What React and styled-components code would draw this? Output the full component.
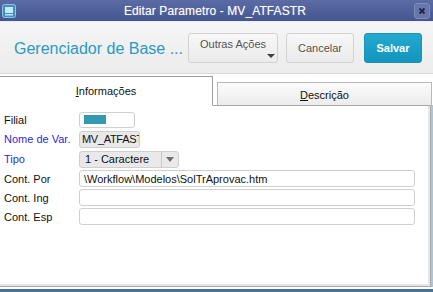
import React from 'react';
import styled, { createGlobalStyle } from 'styled-components';

const GlobalStyle = createGlobalStyle`
  html, body {
    margin: 0;
    padding: 0;
    background: #ffffff;
  }
  body {
    font-family: "Liberation Sans", Arial, sans-serif;
  }
`;

const Window = styled.div`
  width: 433px;
  height: 292px;
  display: flex;
  flex-direction: column;
  overflow: hidden;
  background: #ffffff;
  border-bottom: 3px solid #46729a;
  box-sizing: border-box;
`;

const TitleBar = styled.div`
  height: 21px;
  flex: none;
  display: flex;
  align-items: center;
  padding: 0 3px 0 2px;
  background: linear-gradient(#5b6ba6, #45558f);
  border-bottom: 1px solid #e8ecf4;
`;

const TitleText = styled.div`
  flex: 1;
  text-align: center;
  color: #ffffff;
  font-size: 12px;
  letter-spacing: 0.1px;
  text-shadow: 0 0 1px rgba(255, 255, 255, 0.4);
`;

const CloseBtn = styled.div`
  width: 14px;
  height: 14px;
  border-radius: 3px;
  background: #6777ac;
  border: 1px solid #7f8dbd;
  display: flex;
  align-items: center;
  justify-content: center;
`;

const Header = styled.div`
  height: 51px;
  flex: none;
  display: flex;
  align-items: center;
  padding: 0 11px 0 14px;
  background: linear-gradient(#f5f5f5, #ececec);
  border-bottom: 1px solid #d9d9d9;
`;

const AppTitle = styled.div`
  flex: 1;
  min-width: 0;
  white-space: nowrap;
  color: #2a9ac4;
  font-size: 16px;
  margin-top: 2px;
`;

const Button = styled.div`
  position: relative;
  flex: none;
  height: 30px;
  box-sizing: border-box;
  width: ${p => p.w}px;
  margin-left: ${p => p.gap || 0}px;
  display: flex;
  align-items: center;
  justify-content: center;
  border-radius: 3px;
  font-size: 11px;
  color: ${p => (p.primary ? '#ffffff' : '#555555')};
  font-weight: ${p => (p.primary ? 700 : 400)};
  background: ${p =>
    p.primary ? 'linear-gradient(#25a9cf, #1395bd)' : 'linear-gradient(#f7f7f7, #ebebeb)'};
  border: 1px solid ${p => (p.primary ? '#1a93b8' : '#d2d2d2')};
  padding-bottom: ${p => (p.drop ? 8 : 0)}px;
  margin-top: 1px;
`;

const Caret = styled.span`
  position: absolute;
  right: 2px;
  bottom: 4px;
  width: 0;
  height: 0;
  border-left: 4px solid transparent;
  border-right: 4px solid transparent;
  border-top: 4px solid #3f3f3f;
`;

const TabStrip = styled.div`
  height: 31px;
  flex: none;
  display: flex;
  align-items: flex-end;
  padding-right: 1px;
  position: relative;
  z-index: 1;
`;

const Tab = styled.div`
  box-sizing: border-box;
  width: ${p => p.w}px;
  margin-left: ${p => p.gap || 0}px;
  height: ${p => (p.active ? 30 : 23)}px;
  display: flex;
  align-items: center;
  justify-content: center;
  font-size: 11px;
  color: #111111;
  border: 1px solid ${p => (p.active ? '#9e9e9e' : '#b8b8b8')};
  border-left: ${p => (p.active ? 'none' : '1px solid #b8b8b8')};
  border-bottom: ${p => (p.active ? '1px solid #ffffff' : 'none')};
  background: ${p => (p.active ? '#ffffff' : 'linear-gradient(#fbfbfb, #ececec)')};
  margin-bottom: ${p => (p.active ? -1 : 0)}px;
  padding-top: ${p => (p.active ? 0 : 2)}px;

  u {
    text-decoration: underline;
    text-underline-offset: 1px;
  }
`;

const Panel = styled.div`
  flex: 1;
  margin-right: 2px;
  margin-bottom: 2px;
  border: 1px solid #a8a8a8;
  border-left: none;
  box-shadow: inset -2px -2px 0 #e6e6e6, 2px 0 0 #a9c7dc;
  padding: 4px 15px 0 4px;
  display: flex;
  flex-direction: column;
`;

const Row = styled.div`
  display: flex;
  align-items: center;
  height: ${p => p.h || 19}px;
`;

const Label = styled.div`
  width: 75px;
  flex: none;
  font-size: 11px;
  color: ${p => (p.blue ? '#2b2bd6' : '#111111')};
`;

const Field = styled.div`
  box-sizing: border-box;
  height: ${p => p.h || 17}px;
  width: ${p => (p.w ? `${p.w}px` : 'auto')};
  flex: ${p => (p.w ? 'none' : 1)};
  border: 1px solid #cfcfcf;
  border-radius: 3px;
  background: ${p => (p.ro ? '#e9e9e9' : '#ffffff')};
  font-size: 11px;
  letter-spacing: ${p => (p.tight ? '-0.3px' : '0')};
  color: #111111;
  display: flex;
  align-items: center;
  padding-left: ${p => (p.pl != null ? p.pl : 4)}px;
  overflow: hidden;
  white-space: nowrap;
`;

const Swatch = styled.div`
  width: 22px;
  height: 9px;
  background: #3399b3;
`;

const SelectArrow = styled.div`
  margin-left: auto;
  width: 16px;
  height: 100%;
  border-left: 1px solid #c8c8c8;
  display: flex;
  align-items: center;
  justify-content: center;

  &::after {
    content: '';
    border-left: 4px solid transparent;
    border-right: 4px solid transparent;
    border-top: 5px solid #707070;
  }
`;

export default function App() {
  return (
    <>
      <GlobalStyle />
      <Window>
        <TitleBar>
          <svg width="14" height="14" viewBox="0 0 14 14">
            <rect x="0.5" y="0.5" width="13" height="13" rx="2" fill="#3f8fc0" stroke="#8cc6e6" />
            <rect x="3" y="3" width="8" height="6" fill="#c9e8f6" />
            <rect x="3" y="10" width="8" height="1.5" fill="#c9e8f6" />
          </svg>
          <TitleText>Editar Parametro - MV_ATFASTR</TitleText>
          <CloseBtn>
            <svg width="8" height="8" viewBox="0 0 8 8">
              <path d="M1.5 1.5 L6.5 6.5 M6.5 1.5 L1.5 6.5" stroke="#1d2550" strokeWidth="1.8" />
            </svg>
          </CloseBtn>
        </TitleBar>
        <Header>
          <AppTitle>Gerenciador de Base ...</AppTitle>
          <Button w={90} drop>
            Outras Ações
            <Caret />
          </Button>
          <Button w={68} gap={8}>Cancelar</Button>
          <Button w={58} gap={10} primary>Salvar</Button>
        </Header>
        <TabStrip>
          <Tab w={213} active>
            <span><u>I</u>nformações</span>
          </Tab>
          <Tab w={215} gap={4}>
            <span><u>D</u>escrição</span>
          </Tab>
        </TabStrip>
        <Panel>
          <Row h={19}>
            <Label>Filial</Label>
            <Field w={56} h={16}>
              <Swatch />
            </Field>
          </Row>
          <Row h={20}>
            <Label blue>Nome de Var.</Label>
            <Field w={61} ro pl={2} tight>MV_ATFASTR</Field>
          </Row>
          <Row h={20}>
            <Label blue>Tipo</Label>
            <Field w={100} ro pl={5}>
              1 - Caractere
              <SelectArrow />
            </Field>
          </Row>
          <Row>
            <Label>Cont. Por</Label>
            <Field>\Workflow\Modelos\SolTrAprovac.htm</Field>
          </Row>
          <Row>
            <Label>Cont. Ing</Label>
            <Field />
          </Row>
          <Row>
            <Label>Cont. Esp</Label>
            <Field />
          </Row>
        </Panel>
      </Window>
    </>
  );
}
